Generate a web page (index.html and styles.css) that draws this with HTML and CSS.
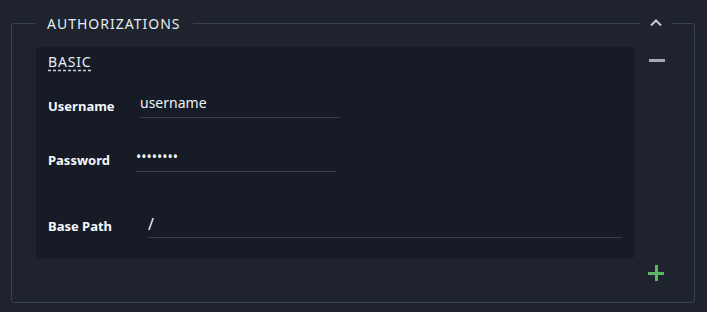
FILE: index.html
```html
<!DOCTYPE html>
<html>
<head>
<meta charset="utf-8">
<link rel="stylesheet" href="styles.css">
</head>
<body>
<section class="panel">
  <div class="panel-head">
    <span class="legend">AUTHORIZATIONS</span>
    <span class="toggle">
      <svg width="14" height="10" viewBox="0 0 14 10"><path d="M2 7.5 L7 2.5 L12 7.5" fill="none" stroke="#c9cdd3" stroke-width="2"/></svg>
    </span>
  </div>
  <div class="panel-body">
    <div class="card">
      <div class="card-title"><span class="abbr">BASIC</span></div>
      <div class="row row-user">
        <span class="label label-user">Username</span>
        <span class="input input-short">username</span>
      </div>
      <div class="row row-pass">
        <span class="label label-pass">Password</span>
        <span class="input input-short dots">••••••••</span>
      </div>
      <div class="row row-path">
        <span class="label label-path">Base Path</span>
        <span class="input input-long path">/</span>
      </div>
    </div>
    <div class="side">
      <span class="minus"></span>
    </div>
  </div>
  <div class="panel-foot">
    <span class="plus"></span>
  </div>
</section>
</body>
</html>
```

FILE: styles.css
```css
html, body {
  margin: 0;
  padding: 0;
  background: #1e232d;
  width: 707px;
  height: 312px;
  overflow: hidden;
  font-family: "Noto Sans", "Open Sans", sans-serif;
  color: #eef3f9;
}
.panel {
  margin: 23px 12px 0 11px;
  border: 1px solid #39424f;
  border-radius: 3px;
  padding-bottom: 21px;
}
.panel-head {
  display: flex;
  justify-content: space-between;
  align-items: center;
  height: 18px;
  margin-top: -9px;
  padding: 0 22px 0 23px;
}
.legend {
  background: #1e232d;
  padding: 0 12px;
  font-size: 14px;
  line-height: 18px;
  letter-spacing: 1px;
  color: #e3edf7;
}
.toggle {
  background: #1e232d;
  width: 32px;
  height: 18px;
  display: flex;
  justify-content: center;
  align-items: center;
}
.toggle svg { display: block; margin-top: -3px; }
.panel-body {
  display: flex;
  padding: 14px 0 0 24px;
}
.card {
  flex: 1;
  background: #161b25;
  border-radius: 3px;
  padding: 5px 13px 20px 12px;
  height: 211px;
  box-sizing: border-box;
}
.card-title {
  font-size: 14px;
  line-height: 20px;
  letter-spacing: 0.8px;
  color: #e6eef7;
}
.abbr {
  text-decoration: underline dashed #c9d1dc;
  text-underline-offset: 3px;
}
.row {
  display: flex;
  align-items: flex-start;
}
.row-user { margin-top: 21px; }
.row-pass { margin-top: 29px; }
.row-path { margin-top: 41px; }
.label {
  font-weight: bold;
  font-size: 13px;
  line-height: 20px;
  padding-top: 3px;
  color: #f4f8fc;
}
.label-user { width: 92px; }
.label-pass { width: 88px; }
.label-path { width: 100px; }
.input {
  font-size: 14px;
  line-height: 20px;
  padding-bottom: 4px;
  border-bottom: 1px solid #383f4c;
  color: #eef3f9;
}
.input-short { width: 200px; }
.input-long { flex: 1; }
.dots { font-size: 14px; letter-spacing: 0; }
.row-path .input { line-height: 23px; padding-bottom: 1px; font-size: 16px; }
.side {
  width: 59px;
  padding: 12px 0 0 14px;
  box-sizing: border-box;
}
.minus {
  display: block;
  width: 16px;
  height: 3px;
  background: #a4aab5;
}
.panel-foot {
  display: flex;
  justify-content: flex-end;
  padding: 7px 30px 0 0;
}
.plus {
  display: block;
  width: 16px;
  height: 16px;
  background:
    linear-gradient(#5bb760, #5bb760) center / 16px 3px no-repeat,
    linear-gradient(#5bb760, #5bb760) center / 3px 16px no-repeat;
}
```
